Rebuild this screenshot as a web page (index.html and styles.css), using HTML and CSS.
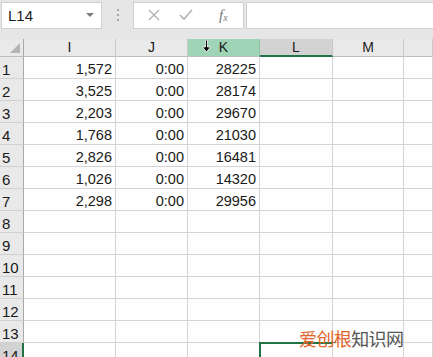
FILE: index.html
```html
<!DOCTYPE html>
<html lang="zh-CN">
<head>
  <meta charset="UTF-8" />
  <title>Sheet</title>
  <link rel="stylesheet" href="styles.css">
</head>
<body>
  <div class="toolbar">
    <div class="name-box">
      <span>L14</span>
      <svg class="caret" width="8" height="5" viewBox="0 0 8 5"><path d="M0 0h8L4 4z" fill="#7a7a7a"/></svg>
    </div>
    <div class="grip"><i></i><i></i><i></i></div>
    <div class="fx-buttons">
      <svg width="12" height="12" viewBox="0 0 12 12"><path d="M1 1l10 10M11 1L1 11" stroke="#b3b3b3" stroke-width="1.4" fill="none"/></svg>
      <svg width="14" height="12" viewBox="0 0 14 12"><path d="M1 6l4 4 8-9" stroke="#b3b3b3" stroke-width="1.6" fill="none"/></svg>
      <span class="fx">f<sub>x</sub></span>
    </div>
    <div class="formula"></div>
  </div>

  <div class="sheet">
    <div class="corner"><span class="tri"></span></div>
    <div class="col-head">I</div>
    <div class="col-head">J</div>
    <div class="col-head col-sel">
      <svg class="cursor" width="9" height="12" viewBox="0 0 9 12"><path d="M3.5 0h2v7h3L4.5 12 0.5 7h3z" fill="#000" stroke="#fff" stroke-width="0.8"/></svg>
      K
    </div>
    <div class="col-head col-active">L</div>
    <div class="col-head">M</div>
    <div class="col-head"></div>
  </div>
  <div class="sheet" id="rows"></div>

  <div class="watermark"><span class="wm-a">爱创根</span><span class="wm-b">知识网</span></div>

  <script>
    const data = [
      ['1,572', '0:00', '28225'],
      ['3,525', '0:00', '28174'],
      ['2,203', '0:00', '29670'],
      ['1,768', '0:00', '21030'],
      ['2,826', '0:00', '16481'],
      ['1,026', '0:00', '14320'],
      ['2,298', '0:00', '29956']
    ];
    const rows = document.getElementById('rows');
    let html = '';
    for (let r = 1; r <= 14; r++) {
      const d = data[r - 1] || ['', '', ''];
      const sel = r === 14 ? ' row-active' : '';
      html += `<div class="row-head${sel}">${r}</div>`;
      html += `<div class="cell">${d[0]}</div>`;
      html += `<div class="cell">${d[1]}</div>`;
      html += `<div class="cell">${d[2]}</div>`;
      html += `<div class="cell${r === 14 ? ' active' : ''}"></div>`;
      html += `<div class="cell"></div><div class="cell"></div>`;
    }
    rows.innerHTML = html;
  </script>
</body>
</html>
```

FILE: styles.css
```css
:root {
  --barra: #e6e6e6;
  --grade: #d4d4d4;
  --cabecalho: #e9e9e9;
  --verde: #217346;
  --texto: #1a1a1a;
}

* {
  box-sizing: border-box;
  margin: 0;
  padding: 0;
}

body {
  width: 433px;
  height: 357px;
  overflow: hidden;
  background: var(--barra);
  font-family: "Liberation Sans", Arial, sans-serif;
  color: var(--texto);
  position: relative;
}

.toolbar {
  display: flex;
  align-items: center;
  height: 39px;
  padding: 1px 0 10px 1px;
}

.name-box {
  width: 101px;
  height: 27px;
  background: #fff;
  border: 1px solid #d0d0d0;
  display: flex;
  align-items: center;
  justify-content: space-between;
  padding: 0 7px 0 6px;
  font-size: 15px;
}

.grip {
  width: 31px;
  display: flex;
  flex-direction: column;
  align-items: center;
  gap: 3px;
}

.grip i {
  width: 2px;
  height: 2px;
  background: #a6a6a6;
}

.fx-buttons {
  width: 111px;
  height: 27px;
  background: #fff;
  border: 1px solid #d0d0d0;
  display: flex;
  align-items: center;
  padding-left: 14px;
  gap: 19px;
}

.fx {
  font-family: "Liberation Serif", serif;
  font-style: italic;
  font-size: 15px;
  color: #777;
  margin-left: 7px;
}

.fx sub {
  font-size: 10px;
  vertical-align: -1px;
}

.formula {
  flex: 1;
  height: 27px;
  margin-left: 2px;
  background: #fff;
  border: 1px solid #d0d0d0;
  border-right: none;
}

.sheet {
  display: grid;
  grid-template-columns: 24px 92px 72px 72px 73px 71px 1fr;
}

.corner,
.col-head {
  height: 18px;
  background: var(--cabecalho);
  border-right: 1px solid #c8c8c8;
  border-bottom: 1px solid #bdbdbd;
  font-size: 14px;
  line-height: 17px;
  text-align: center;
  position: relative;
}

.corner {
  border-right-color: #a9a9a9;
}

.tri {
  position: absolute;
  right: 3px;
  bottom: 3px;
  width: 0;
  height: 0;
  border-left: 10px solid transparent;
  border-bottom: 10px solid #b4b4b4;
}

.col-sel {
  background: #9fd5b6;
  border-right-color: #8fc0a4;
}

.col-active {
  background: #d3d3d3;
  border-bottom: 2px solid var(--verde);
}

.cursor {
  position: absolute;
  left: 14px;
  top: 1px;
}

.row-head {
  height: 22px;
  background: var(--cabecalho);
  border-right: 1px solid #a9a9a9;
  border-bottom: 1px solid #d0d0d0;
  font-size: 15px;
  line-height: 25px;
  padding-left: 2px;
}

.row-active {
  background: #d3d3d3;
  border-right: 2px solid var(--verde);
}

.cell {
  height: 22px;
  background: #fdfefd;
  border-right: 1px solid var(--grade);
  border-bottom: 1px solid var(--grade);
  font-size: 14.5px;
  line-height: 25px;
  text-align: right;
  padding-right: 3px;
  position: relative;
}

.cell.active::after {
  content: "";
  position: absolute;
  left: -1px;
  top: -1px;
  width: 73px;
  height: 24px;
  border: 2px solid var(--verde);
}

.watermark {
  position: absolute;
  left: 299px;
  top: 327px;
  font-family: "Noto Sans CJK SC", sans-serif;
  font-size: 18px;
  line-height: 22px;
  letter-spacing: -0.6px;
}

.wm-a {
  color: #e2652c;
}

.wm-b {
  color: #555;
}
```
